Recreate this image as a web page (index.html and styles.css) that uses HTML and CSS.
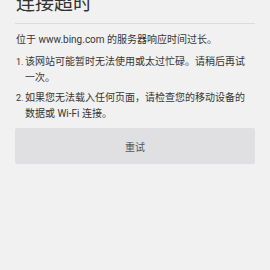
FILE: index.html
```html
<!DOCTYPE html>
<html lang="zh-CN">
  <head>
    <meta charset="UTF-8" />
    <meta name="viewport" content="width=device-width, initial-scale=1.0" />
    <title>连接超时</title>
    <link rel="stylesheet" href="styles.css">
  </head>
  <body>
    <div class="container">
      <h1>连接超时</h1>
      <p class="summary">位于 www.bing.com 的服务器响应时间过长。</p>
      <ol class="reasons">
        <li><span class="num">1.</span><span>该网站可能暂时无法使用或太过忙碌。请稍后再试一次。</span></li>
        <li><span class="num">2.</span><span>如果您无法载入任何页面，请检查您的移动设备的数据或 Wi-Fi 连接。</span></li>
      </ol>
      <button class="retry">重试</button>
    </div>
  </body>
</html>
```

FILE: styles.css
```css
* {
  margin: 0;
  padding: 0;
  box-sizing: border-box;
}

body {
  font-family: Roboto, "Noto Sans CJK SC", sans-serif;
  background-color: #f1f1f1;
  color: #363636;
  overflow: hidden;
}

.container {
  padding: 0 15px;
}

h1 {
  margin-top: -6px;
  padding: 0 1px 10px;
  font-size: 19px;
  line-height: 19px;
  font-weight: normal;
  color: #333;
  border-bottom: 1px solid #dcdcdc;
}

.summary {
  margin-top: 8px;
  padding-left: 1px;
  font-size: 10px;
  line-height: 16px;
}

.reasons {
  list-style: none;
  margin-top: 6px;
  padding-right: 8px;
  font-size: 10px;
  line-height: 16px;
}

.reasons li {
  display: flex;
  padding-left: 1px;
}

.reasons li + li {
  margin-top: 3.5px;
}

.num {
  flex: none;
  width: 9px;
  font-size: 9px;
}

.retry {
  display: block;
  width: 100%;
  height: 36px;
  margin-top: 6.5px;
  border: none;
  border-radius: 2px;
  background-color: #e0e0e3;
  color: #555;
  font-family: inherit;
  font-size: 10px;
}
```
